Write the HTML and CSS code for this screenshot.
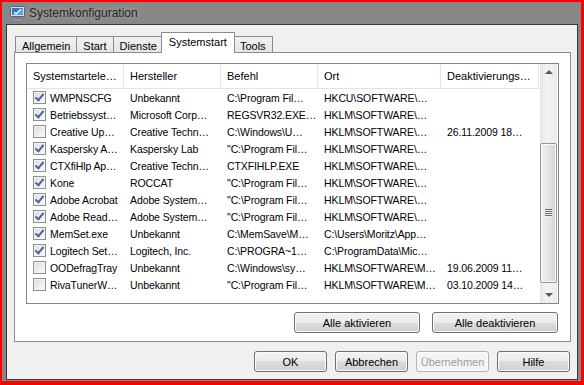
FILE: index.html
```html
<!DOCTYPE html>
<html lang="de">
  <head>
    <meta charset="UTF-8" />
    <title>Systemkonfiguration</title>
    <link rel="stylesheet" href="styles.css">
  </head>
  <body>
    <div class="window">
      <div class="titlebar">
        <svg class="titlebar__icon" width="17" height="17" viewBox="0 0 17 17">
          <rect x="1.5" y="1.5" width="14" height="10" rx="1" fill="#d9dde3" stroke="#5a6270"/>
          <rect x="3" y="3" width="11" height="7" fill="#2f74d0"/>
          <path d="M3 10 L14 3 L14 10 Z" fill="#5fa3ec"/>
          <path d="M5 7 L7 9 L12 4" fill="none" stroke="#fff" stroke-width="1.2"/>
          <rect x="6" y="12" width="5" height="2" fill="#7b828e"/>
          <rect x="3.5" y="14" width="10" height="2" rx="1" fill="#a9afb9" stroke="#5a6270" stroke-width="0.6"/>
        </svg>
        <span class="titlebar__text">Systemkonfiguration</span>
      </div>

      <div class="client">
        <div class="tabs">
          <div class="tab">Allgemein</div>
          <div class="tab">Start</div>
          <div class="tab">Dienste</div>
          <div class="tab tab--active">Systemstart</div>
          <div class="tab">Tools</div>
        </div>

        <div class="panel">
          <div class="listbox">
            <div class="list">
              <div class="list-header">
                <div class="col">Systemstartele…</div>
                <div class="col">Hersteller</div>
                <div class="col">Befehl</div>
                <div class="col">Ort</div>
                <div class="col">Deaktivierungs…</div>
              </div>
              <div class="list-rows">
                <div class="row"><div class="cell"><span class="check check--on"></span>WMPNSCFG</div><div class="cell">Unbekannt</div><div class="cell">C:\Program Fil…</div><div class="cell">HKCU\SOFTWARE\…</div><div class="cell"></div></div>
                <div class="row"><div class="cell"><span class="check check--on"></span>Betriebssyst…</div><div class="cell">Microsoft Corp…</div><div class="cell">REGSVR32.EXE…</div><div class="cell">HKLM\SOFTWARE\…</div><div class="cell"></div></div>
                <div class="row"><div class="cell"><span class="check"></span>Creative Up…</div><div class="cell">Creative Techn…</div><div class="cell">C:\Windows\U…</div><div class="cell">HKLM\SOFTWARE\…</div><div class="cell">26.11.2009 18…</div></div>
                <div class="row"><div class="cell"><span class="check check--on"></span>Kaspersky A…</div><div class="cell">Kaspersky Lab</div><div class="cell">"C:\Program Fil…</div><div class="cell">HKLM\SOFTWARE\…</div><div class="cell"></div></div>
                <div class="row"><div class="cell"><span class="check check--on"></span>CTXfiHlp Ap…</div><div class="cell">Creative Techn…</div><div class="cell">CTXFIHLP.EXE</div><div class="cell">HKLM\SOFTWARE\…</div><div class="cell"></div></div>
                <div class="row"><div class="cell"><span class="check check--on"></span>Kone</div><div class="cell">ROCCAT</div><div class="cell">"C:\Program Fil…</div><div class="cell">HKLM\SOFTWARE\…</div><div class="cell"></div></div>
                <div class="row"><div class="cell"><span class="check check--on"></span>Adobe Acrobat</div><div class="cell">Adobe System…</div><div class="cell">"C:\Program Fil…</div><div class="cell">HKLM\SOFTWARE\…</div><div class="cell"></div></div>
                <div class="row"><div class="cell"><span class="check check--on"></span>Adobe Read…</div><div class="cell">Adobe System…</div><div class="cell">"C:\Program Fil…</div><div class="cell">HKLM\SOFTWARE\…</div><div class="cell"></div></div>
                <div class="row"><div class="cell"><span class="check check--on"></span>MemSet.exe</div><div class="cell">Unbekannt</div><div class="cell">C:\MemSave\M…</div><div class="cell">C:\Users\Moritz\App…</div><div class="cell"></div></div>
                <div class="row"><div class="cell"><span class="check check--on"></span>Logitech Set…</div><div class="cell">Logitech, Inc.</div><div class="cell">C:\PROGRA~1…</div><div class="cell">C:\ProgramData\Mic…</div><div class="cell"></div></div>
                <div class="row"><div class="cell"><span class="check"></span>OODefragTray</div><div class="cell">Unbekannt</div><div class="cell">C:\Windows\sy…</div><div class="cell">HKLM\SOFTWARE\M…</div><div class="cell">19.06.2009 11…</div></div>
                <div class="row"><div class="cell"><span class="check"></span>RivaTunerW…</div><div class="cell">Unbekannt</div><div class="cell">"C:\Program Fil…</div><div class="cell">HKLM\SOFTWARE\M…</div><div class="cell">03.10.2009 14…</div></div>
              </div>
            </div>
            <div class="scrollbar">
              <div class="scrollbar__btn scrollbar__btn--up"></div>
              <div class="scrollbar__track">
                <div class="scrollbar__thumb"><span class="scrollbar__grip"></span></div>
              </div>
              <div class="scrollbar__btn scrollbar__btn--down"></div>
            </div>
          </div>

          <div class="panel-buttons">
            <button type="button" class="btn btn--wide">Alle aktivieren</button>
            <button type="button" class="btn btn--wide">Alle deaktivieren</button>
          </div>
        </div>

        <div class="dialog-buttons">
          <button type="button" class="btn">OK</button>
          <button type="button" class="btn">Abbrechen</button>
          <button type="button" class="btn" disabled>Übernehmen</button>
          <button type="button" class="btn">Hilfe</button>
        </div>
      </div>
    </div>
  </body>
</html>
```

FILE: styles.css
```css
* {
  box-sizing: border-box;
}

body {
  margin: 0;
  background-color: #f00;
  font-family: "Liberation Sans", Arial, sans-serif;
  font-size: 11px;
  color: #000;
}

.window {
  display: flex;
  flex-direction: column;
  height: 379px;
  margin: 2px 3px 4px 2px;
  padding: 0 3px 1px 4px;
  background-color: #878787;
}

.titlebar {
  display: flex;
  align-items: center;
  height: 22px;
  padding-left: 3px;
}

.titlebar__icon {
  display: block;
  margin-right: 3px;
}

.titlebar__text {
  font-size: 12px;
  color: #262626;
  text-shadow: 0 0 6px rgba(255, 255, 255, 0.45);
}

.client {
  display: flex;
  flex-direction: column;
  flex: 1;
  border: 1px solid #3a3a3a;
  background-color: #f0f0f0;
}

/* tabs */

.tabs {
  display: flex;
  align-items: flex-end;
  height: 28px;
  padding-left: 8px;
  margin-bottom: -1px;
}

.tab {
  height: 17px;
  padding: 3px 6px 0;
  border: 1px solid #898c95;
  border-bottom: 0;
  margin-right: -1px;
  background: linear-gradient(#f2f2f2, #e4e4e4);
  white-space: nowrap;
}

.tab--active {
  position: relative;
  z-index: 1;
  height: 21px;
  padding: 3px 7px 0;
  margin: 0 -2px 0 -2px;
  background: #fff;
}

.panel {
  display: flex;
  flex-direction: column;
  flex: 1;
  margin: 0 6px 0 7px;
  padding: 10px 11px 8px;
  border: 1px solid #898c95;
  background-color: #fff;
}

/* list view */

.listbox {
  display: flex;
  height: 241px;
  border: 1px solid #828790;
}

.list {
  flex: 1;
  overflow: hidden;
}

.list-header,
.row {
  display: grid;
  grid-template-columns: 97px 97px 97px 123px 98px;
}

.list-header {
  height: 25px;
  border-bottom: 1px solid #e3e3e3;
}

.col {
  display: flex;
  align-items: center;
  padding-left: 6px;
  border-right: 1px solid #e3e6ea;
  white-space: nowrap;
  overflow: hidden;
}

.row {
  height: 17px;
}

.cell {
  display: flex;
  align-items: center;
  padding-left: 6px;
  font-size: 10.5px;
  letter-spacing: -0.1px;
  white-space: nowrap;
}

.check {
  position: relative;
  flex: none;
  width: 13px;
  height: 13px;
  margin-right: 4px;
  border: 1px solid #8f8f8f;
  background: linear-gradient(135deg, #dcdcdc, #fbfbfb);
  box-shadow: inset 0 0 0 1px #f4f4f4;
}

.check--on::after {
  content: "";
  position: absolute;
  left: 3px;
  top: 0;
  width: 3px;
  height: 7px;
  border: solid #4a66a0;
  border-width: 0 2px 2px 0;
  transform: rotate(40deg);
}

/* scrollbar */

.scrollbar {
  display: flex;
  flex-direction: column;
  width: 17px;
  margin-right: 1px;
  background: linear-gradient(90deg, #e6e6e6, #f3f3f3 40%, #ececec);
}

.scrollbar__btn {
  position: relative;
  height: 17px;
}

.scrollbar__btn::after {
  content: "";
  position: absolute;
  left: 5px;
  border-left: 4px solid transparent;
  border-right: 4px solid transparent;
}

.scrollbar__btn--up::after {
  top: 6px;
  border-bottom: 4px solid #5b5b5b;
}

.scrollbar__btn--down::after {
  top: 7px;
  border-top: 4px solid #5b5b5b;
}

.scrollbar__track {
  display: flex;
  flex: 1;
  padding: 62px 0 3px;
}

.scrollbar__thumb {
  display: flex;
  flex: 1;
  align-items: center;
  justify-content: center;
  border: 1px solid #969696;
  border-radius: 2px;
  background: linear-gradient(90deg, #f3f3f3, #e4e4e4 50%, #d4d4d4);
  box-shadow: inset 0 0 0 1px #fafafa;
}

.scrollbar__grip {
  display: block;
  width: 7px;
  height: 8px;
  background: repeating-linear-gradient(#6d6d6d 0 1px, #f0f0f0 1px 2px);
}

/* buttons */

.panel-buttons {
  display: flex;
  justify-content: flex-end;
  gap: 12px;
  margin-top: 8px;
  padding-right: 1px;
}

.dialog-buttons {
  display: flex;
  justify-content: flex-end;
  gap: 8px;
  padding: 9px 7px 7px;
}

.btn {
  width: 73px;
  height: 21px;
  padding: 0;
  border: 1px solid #707070;
  border-radius: 3px;
  background: linear-gradient(#f2f2f2 0%, #ebebeb 50%, #dddddd 50%, #cfcfcf 100%);
  box-shadow: inset 0 0 0 1px #fbfbfb;
  font-family: inherit;
  font-size: 11px;
  color: #000;
}

.btn--wide {
  width: 126px;
}

.btn:disabled {
  border-color: #adb2b5;
  background: #f4f4f4;
  color: #a0a0a0;
}
```
